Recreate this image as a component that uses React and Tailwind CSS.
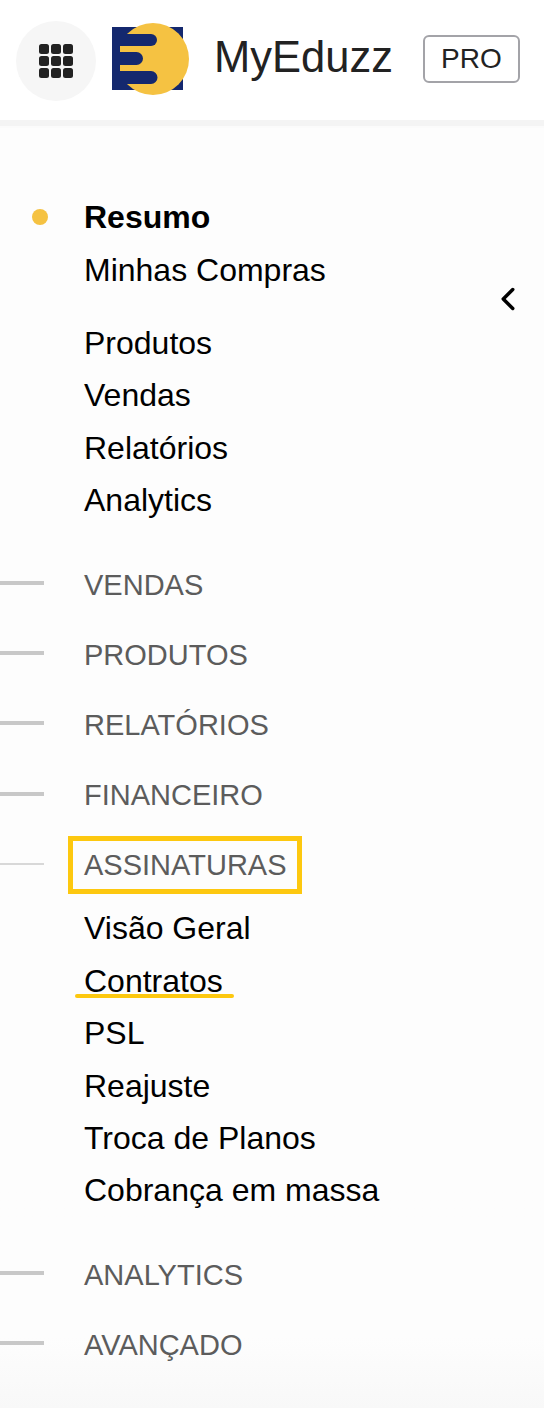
import { ChevronLeft } from 'lucide-react'

const topLinks = ['Resumo', 'Minhas Compras']
const mainLinks = ['Produtos', 'Vendas', 'Relatórios', 'Analytics']
const sections = ['VENDAS', 'PRODUTOS', 'RELATÓRIOS', 'FINANCEIRO']
const subLinks = ['Visão Geral', 'Contratos', 'PSL', 'Reajuste', 'Troca de Planos', 'Cobrança em massa']

function GridIcon() {
  return (
    <svg width="34" height="34" viewBox="0 0 34 34" fill="#222">
      {[0, 12, 24].map(y =>
        [0, 12, 24].map(x => <rect key={`${x}-${y}`} x={x} y={y} width="10" height="10" rx="2.5" />)
      )}
    </svg>
  )
}

function Logo() {
  return (
    <svg width="78" height="72" viewBox="0 0 78 72">
      <rect x="0" y="4" width="71" height="63" fill="#14286e" />
      <circle cx="41" cy="36" r="36" fill="#f5c242" />
      <rect x="0" y="4" width="8" height="63" fill="#14286e" />
      <path d="M8 11 H39 a6 6 0 0 1 0 12 H8 Z" fill="#14286e" />
      <path d="M8 29 H24.5 a6.5 6.5 0 0 1 0 13 H8 Z" fill="#14286e" />
      <path d="M8 48 H39 a6.5 6.5 0 0 1 0 13 H8 Z" fill="#14286e" />
    </svg>
  )
}

function Item({ label, bold, dot }) {
  return (
    <div className={`relative flex h-[52.4px] items-center pl-[84px] text-[32px] text-black ${bold ? 'font-bold' : ''}`}>
      {dot && <span className="absolute left-8 top-[18px] h-4 w-4 rounded-full bg-[#f5c242]" />}
      {label}
    </div>
  )
}

function Section({ label, thin }) {
  return (
    <div className="flex h-[70.2px] items-center text-[29px] text-[#5c5c5c]">
      <span className={`mr-[40px] mb-[3px] w-[44px] ${thin ? 'h-0.5 bg-[#d8d8d8]' : 'h-1 bg-[#c8c8c8]'}`} />
      <span className="mt-[2px]">{label}</span>
    </div>
  )
}

export default function App() {
  return (
    <div className="relative h-[1408px] w-[544px] overflow-hidden bg-linear-to-b from-[#fdfdfd] from-[95%] to-[#f8f8f8] font-['Liberation_Sans',Arial,sans-serif]">
      <header className="box-border flex h-[120px] items-center bg-white pt-[2px] pl-4">
        <div className="flex h-20 w-20 items-center justify-center rounded-full bg-[#f6f6f6]">
          <GridIcon />
        </div>
        <div className="mb-[4px] ml-4 flex items-center">
          <Logo />
        </div>
        <span className="mb-[6px] ml-[24px] text-[43.5px] leading-none text-[#222]">MyEduzz</span>
        <span className="mb-[4px] ml-[30px] flex h-[48px] w-[97px] items-center justify-center rounded-md border-2 border-[#a3a3a8] text-[28px] text-[#222]">
          PRO
        </span>
      </header>
      <div className="h-[6px] bg-[#f4f4f4]" />
      <div className="h-[2px] bg-[#fbfbfb]" />

      <nav className="pt-[63px]">
        {topLinks.map((l, i) => (
          <Item key={l} label={l} bold={i === 0} dot={i === 0} />
        ))}
        <div className="h-[21px]" />
        {mainLinks.map(l => (
          <Item key={l} label={l} />
        ))}
        <div className="h-[23px]" />
        {sections.map(l => (
          <Section key={l} label={l} />
        ))}
        <Section label="ASSINATURAS" thin />
        <div className="mt-[2px]">
          {subLinks.map(l => (
            <Item key={l} label={l} />
          ))}
        </div>
        <div className="h-[23px]" />
        <Section label="ANALYTICS" />
        <Section label="AVANÇADO" />
      </nav>

      <ChevronLeft className="absolute left-[489px] top-[280px] text-black" size={38} strokeWidth={2.2} />
      {/* marcacoes amarelas */}
      <div className="absolute left-[68px] top-[836px] h-[58px] w-[234px] border-[5px] border-[#fdc80f]" />
      <div className="absolute left-[75px] top-[994px] h-1 w-[159px] rounded-full bg-[#fdc80f]" />
    </div>
  )
}
